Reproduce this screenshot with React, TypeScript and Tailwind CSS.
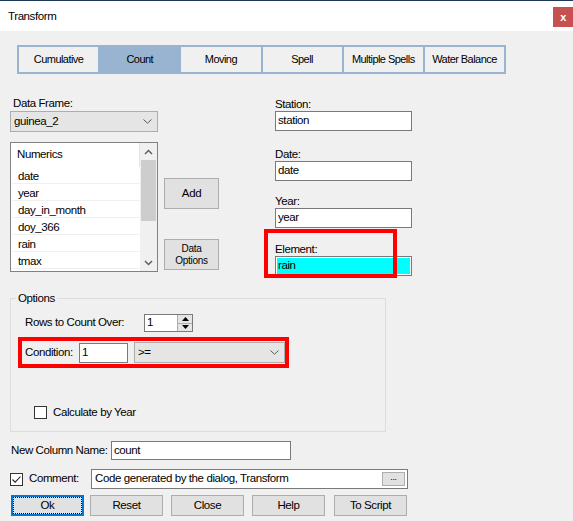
import React from "react";

const Chevron = () => (
  <svg width="9" height="5" viewBox="0 0 9 5">
    <path d="M0.5 0.5 L4.5 4.2 L8.5 0.5" fill="none" stroke="#5a5a5a" strokeWidth="1" />
  </svg>
);

const SmallChevron = ({ up }: { up?: boolean }) => (
  <svg width="9" height="6" viewBox="0 0 9 6">
    <path
      d={up ? "M1 5 L4.5 1.5 L8 5" : "M1 1 L4.5 4.5 L8 1"}
      fill="none"
      stroke="#606060"
      strokeWidth="1.5"
    />
  </svg>
);

const tabs = ["Cumulative", "Count", "Moving", "Spell", "Multiple Spells", "Water Balance"];
const items = ["date", "year", "day_in_month", "doy_366", "rain", "tmax"];

export default function App() {
  return (
    <div className="w-[573px] h-[521px] bg-[#f0f0f0] flex flex-col overflow-hidden font-['Liberation_Sans',Arial,sans-serif] text-[11.5px] tracking-[-0.4px] text-black">
      <div className="h-px bg-[#1f3758]" />
      <div className="h-[30px] bg-white flex items-center justify-between">
        <span className="pl-[8px] leading-[13px]">Transform</span>
        <div className="w-[20px] h-[20px] mt-[2px] bg-[#c75050] text-white font-bold text-[11px] flex items-center justify-center leading-none">
          x
        </div>
      </div>

      {/* tabs */}
      <div className="mt-[14px] ml-[17px] w-[489px] h-[29px] bg-[#99b4d1] p-[2px] flex gap-[2px]">
        {tabs.map((t) => (
          <div
            key={t}
            className={`flex-1 flex items-center justify-center text-[11px] tracking-[-0.55px] ${
              t === "Count" ? "bg-[#99b4d1]" : "bg-[#f0f0f0]"
            }`}
          >
            {t}
          </div>
        ))}
      </div>

      {/* main row */}
      <div className="flex items-start">
        {/* left column */}
        <div className="ml-[10px] w-[148px] flex flex-col">
          <div className="mt-[23px] h-[13px] leading-[13px] pl-[3px]">Data Frame:</div>
          <div className="mt-px h-[21px] bg-[#e5e5e5] border border-[#adadad] flex items-center justify-between pl-[3px] pr-[5px]">
            <span>guinea_2</span>
            <Chevron />
          </div>
          <div className="mt-[10px] h-[130px] border border-[#828282] bg-white flex">
            <div className="flex-1 flex flex-col overflow-hidden">
              <div className="h-[24px] shrink-0 flex items-center pl-[6px] border-r border-[#e5e5e5]">Numerics</div>
              {items.map((it) => (
                <div key={it} className="h-[17px] shrink-0 flex items-center pl-[6px] pt-[3px] border-b border-[#f0f0f0] ml-px">
                  {it}
                </div>
              ))}
            </div>
            <div className="w-[17px] bg-[#f0f0f0] flex flex-col">
              <div className="h-[17px] flex items-center justify-center">
                <SmallChevron up />
              </div>
              <div className="mx-px h-[61px] bg-[#cdcdcd]" />
              <div className="flex-1" />
              <div className="h-[17px] flex items-center justify-center">
                <SmallChevron />
              </div>
            </div>
          </div>
        </div>

        {/* middle column */}
        <div className="ml-[6px] w-[55px] flex flex-col">
          <div className="mt-[104px] h-[31px] bg-[#e1e1e1] border border-[#adadad] flex items-center justify-center">
            Add
          </div>
          <div className="mt-[30px] h-[31px] bg-[#e1e1e1] border border-[#adadad] flex flex-col items-center justify-center text-[10px] leading-[11.5px] tracking-[-0.3px]">
            <span>Data</span>
            <span>Options</span>
          </div>
        </div>

        {/* right column */}
        <div className="ml-[56px] w-[137px] flex flex-col">
          <div className="mt-[24px] h-[13px] leading-[13px]">Station:</div>
          <div className="h-[20px] bg-white border border-[#7a7a7a] flex items-center pl-[2px]">station</div>
          <div className="mt-[17px] h-[13px] leading-[13px]">Date:</div>
          <div className="h-[20px] bg-white border border-[#7a7a7a] flex items-center pl-[2px]">date</div>
          <div className="mt-[14px] h-[13px] leading-[13px]">Year:</div>
          <div className="h-[20px] bg-white border border-[#7a7a7a] flex items-center pl-[2px]">year</div>
          <div className="mt-[15px] relative flex flex-col">
            <div className="h-[13px] leading-[13px]">Element:</div>
            <div className="h-[20px] bg-white border border-[#7a7a7a] p-px flex">
              <div className="flex-1 bg-[#00ffff] flex items-center pl-px">rain</div>
            </div>
            <div className="absolute left-[-11px] top-[-14px] w-[133px] h-[49px] border-4 border-[#ff0000]" />
          </div>
        </div>
      </div>

      {/* options group */}
      <fieldset className="mt-[16px] ml-[10px] w-[376px] border border-[#dcdcdc] pb-[12px]">
        <legend className="ml-[5px] px-[2px] leading-[13px]">Options</legend>
        <div className="mt-[9px] h-[18px] flex items-center">
          <span className="pl-[14px] w-[133px]">Rows to Count Over:</span>
          <div className="w-[49px] h-[18px] bg-white border border-[#7a7a7a] flex">
            <div className="flex-1 flex items-center pl-[2px]">1</div>
            <div className="w-[15px] flex flex-col border-l border-[#adadad] bg-[#e5e5e5]">
              <div className="flex-1 flex items-center justify-center border-b border-[#adadad]">
                <svg width="7" height="4" viewBox="0 0 7 4">
                  <path d="M0 4 L3.5 0 L7 4 Z" fill="#000" />
                </svg>
              </div>
              <div className="flex-1 flex items-center justify-center">
                <svg width="7" height="4" viewBox="0 0 7 4">
                  <path d="M0 0 L3.5 4 L7 0 Z" fill="#000" />
                </svg>
              </div>
            </div>
          </div>
        </div>
        <div className="mt-[5px] ml-[7px] w-[271px] h-[31px] border-4 border-[#ff0000] flex items-center pl-[3px]">
          <span className="w-[54px]">Condition:</span>
          <div className="w-[49px] h-[20px] bg-white border border-[#7a7a7a] flex items-center pl-[2px]">1</div>
          <div className="ml-[6px] w-[151px] h-[21px] bg-[#e5e5e5] border border-[#adadad] flex items-center justify-between pl-[3px] pr-[5px]">
            <span>&gt;=</span>
            <Chevron />
          </div>
        </div>
        <div className="mt-[38px] ml-[23px] h-[13px] flex items-center">
          <div className="w-[13px] h-[13px] bg-white border border-[#333333]" />
          <span className="ml-[6px]">Calculate by Year</span>
        </div>
      </fieldset>

      {/* new column name */}
      <div className="mt-[9px] h-[19px] flex items-center">
        <span className="pl-[11px] w-[111px]">New Column Name:</span>
        <div className="w-[180px] h-[19px] bg-white border border-[#7a7a7a] flex items-center pl-[2px]">count</div>
      </div>

      {/* comment */}
      <div className="mt-[9px] h-[20px] flex items-center">
        <div className="ml-[10px] w-[13px] h-[13px] bg-white border border-[#333333] flex items-center justify-center">
          <svg width="11" height="11" viewBox="0 0 11 11">
            <path d="M1.5 5.5 L4.2 8.2 L9.5 2.5" fill="none" stroke="#222" strokeWidth="1.1" />
          </svg>
        </div>
        <span className="ml-[6px] w-[62px]">Comment:</span>
        <div className="w-[317px] h-[20px] bg-white border border-[#7a7a7a] flex items-center justify-between pl-[3px] pr-[2px]">
          <span>Code generated by the dialog, Transform</span>
          <div className="w-[23px] h-[14px] bg-[#e1e1e1] border border-[#adadad] flex items-center justify-center text-[9px] leading-none pb-[3px]">
            ...
          </div>
        </div>
      </div>

      {/* buttons */}
      <div className="mt-[6px] h-[21px] flex">
        <div className="ml-[11px] w-[73px] h-[21px] bg-[#e1e1e1] border-2 border-[#0078d7] outline-1 outline-dotted outline-black outline-offset-[-3px] flex items-center justify-center">
          Ok
        </div>
        <div className="ml-[6px] w-[73px] h-[21px] bg-[#e1e1e1] border border-[#adadad] flex items-center justify-center">
          Reset
        </div>
        <div className="ml-[8px] w-[73px] h-[21px] bg-[#e1e1e1] border border-[#adadad] flex items-center justify-center">
          Close
        </div>
        <div className="ml-[8px] w-[73px] h-[21px] bg-[#e1e1e1] border border-[#adadad] flex items-center justify-center">
          Help
        </div>
        <div className="ml-[9px] w-[73px] h-[21px] bg-[#e1e1e1] border border-[#adadad] flex items-center justify-center">
          To Script
        </div>
      </div>
    </div>
  );
}
